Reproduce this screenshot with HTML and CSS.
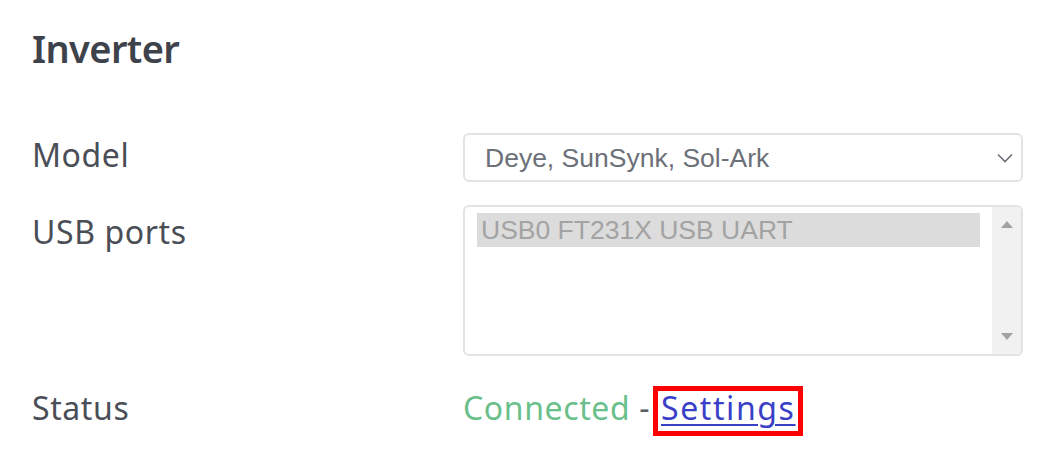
FILE: index.html
```html
<!DOCTYPE html>
<html lang="en">
<head>
<meta charset="utf-8">
<title>Inverter</title>
<link rel="stylesheet" href="styles.css">
</head>
<body>
<main class="panel">
  <h2 class="title">Inverter</h2>
  <div class="form">
    <div class="label label-model">Model</div>
    <div class="select">
      <span class="select-value">Deye, SunSynk, Sol-Ark</span>
      <svg class="chevron" width="16" height="10" viewBox="0 0 16 10"><path d="M1 1.5 L8 8.5 L15 1.5" fill="none" stroke="#6c7078" stroke-width="1.6"/></svg>
    </div>

    <div class="label label-usb">USB ports</div>
    <div class="listbox">
      <div class="options">
        <div class="option selected">USB0 FT231X USB UART</div>
      </div>
      <div class="scrollbar">
        <svg class="arrow" width="12" height="7" viewBox="0 0 12 7"><path d="M0 7 L6 0 L12 7 Z" fill="#a3a3a3"/></svg>
        <svg class="arrow" width="12" height="7" viewBox="0 0 12 7"><path d="M0 0 L6 7 L12 0 Z" fill="#a3a3a3"/></svg>
      </div>
    </div>

    <div class="label label-status">Status</div>
    <div class="status"><span class="connected">Connected</span><span class="dash"> - </span><a class="settings" href="#">Settings</a></div>
  </div>
</main>
</body>
</html>
```

FILE: styles.css
```css
html, body {
  margin: 0;
  padding: 0;
  background: #ffffff;
}

.panel {
  padding: 24px 35px 24px 32px;
  font-family: "Noto Sans", "Open Sans", sans-serif;
  color: #4a4e56;
}

.title {
  margin: 0;
  font-size: 38px;
  font-weight: 600;
  line-height: 48px;
  letter-spacing: -0.6px;
  color: #3e424a;
}

.form {
  margin-top: 61px;
  display: grid;
  grid-template-columns: 431px 1fr;
  row-gap: 23px;
  align-items: start;
}

.label {
  font-size: 32px;
  line-height: 40px;
  font-weight: 400;
  letter-spacing: 0.6px;
  color: #4a4e56;
}

.label-model { padding-top: 2px; }
.label-usb { padding-top: 7px; }
.label-status { padding-top: 9px; }

.select {
  box-sizing: border-box;
  height: 49px;
  border: 2px solid #e3e3e3;
  border-radius: 6px;
  display: flex;
  align-items: center;
  justify-content: space-between;
  padding: 0 8px 0 20px;
  font-family: "Liberation Sans", Arial, sans-serif;
  font-size: 26.5px;
  color: #6c7078;
}

.select-value {
  line-height: 45px;
  padding-top: 1px;
}

.chevron {
  display: block;
}

.listbox {
  box-sizing: border-box;
  height: 151px;
  border: 2px solid #e3e3e3;
  border-radius: 6px;
  display: flex;
  overflow: hidden;
}

.options {
  flex: 1;
  padding: 6px 12px 0 12px;
}

.option {
  height: 34px;
  line-height: 34px;
  padding-left: 4px;
  font-family: "Liberation Sans", Arial, sans-serif;
  font-size: 26.5px;
  color: #a3a3a3;
  white-space: nowrap;
}

.option.selected {
  background: #dcdcdc;
}

.scrollbar {
  width: 29px;
  background: #f1f1f1;
  display: flex;
  flex-direction: column;
  justify-content: space-between;
  align-items: center;
  padding: 14px 0 14px;
}

.arrow {
  display: block;
}

.status {
  padding-top: 7px;
  font-size: 32px;
  line-height: 40px;
  letter-spacing: 0.6px;
  white-space: nowrap;
}

.connected {
  color: #6abf8b;
}

.dash {
  color: #5a5e66;
}

.settings {
  display: inline-block;
  margin-left: -6px;
  line-height: 33px;
  padding: 0 2px 7px 3px;
  border: 5px solid #ff0000;
  letter-spacing: 1.6px;
  color: #3a3fc8;
  text-decoration: underline;
  text-decoration-thickness: 2px;
  text-underline-offset: 4px;
}
```
